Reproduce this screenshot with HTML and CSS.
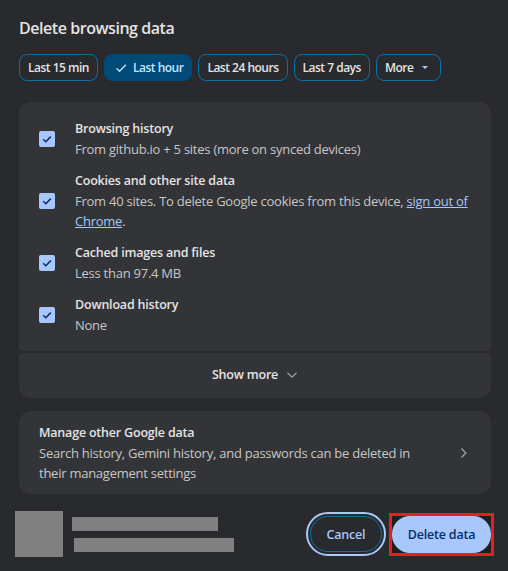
FILE: index.html
```html
<!DOCTYPE html>
<html lang="en">
<head>
  <meta charset="UTF-8">
  <title>Delete browsing data</title>
  <link rel="stylesheet" href="styles.css">
</head>
<body>
  <div class="dialog">
    <h1 class="title">Delete browsing data</h1>

    <div class="chips">
      <button class="chip">Last 15 min</button>
      <button class="chip selected">
        <svg class="chip-check" width="12" height="12" viewBox="0 0 12 12"><path d="M1.5 6.3 L4.6 9.3 L10.8 2.8" fill="none" stroke="currentColor" stroke-width="1.3"/></svg>
        Last hour
      </button>
      <button class="chip">Last 24 hours</button>
      <button class="chip">Last 7 days</button>
      <button class="chip more">More <span class="caret"></span></button>
    </div>

    <div class="data-types">
      <ul class="types-list">
        <li class="type-row">
          <span class="checkbox"><svg width="16" height="16" viewBox="0 0 16 16"><path d="M4.2 8.3 L6.8 10.7 L11.8 5.6" fill="none" stroke="#062e6f" stroke-width="1.5"/></svg></span>
          <div class="type-text">
            <div class="type-name">Browsing history</div>
            <div class="type-desc">From github.io + 5 sites (more on synced devices)</div>
          </div>
        </li>
        <li class="type-row">
          <span class="checkbox"><svg width="16" height="16" viewBox="0 0 16 16"><path d="M4.2 8.3 L6.8 10.7 L11.8 5.6" fill="none" stroke="#062e6f" stroke-width="1.5"/></svg></span>
          <div class="type-text">
            <div class="type-name">Cookies and other site data</div>
            <div class="type-desc">From 40 sites. To delete Google cookies from this device, <a href="#" class="link">sign out of Chrome</a>.</div>
          </div>
        </li>
        <li class="type-row">
          <span class="checkbox"><svg width="16" height="16" viewBox="0 0 16 16"><path d="M4.2 8.3 L6.8 10.7 L11.8 5.6" fill="none" stroke="#062e6f" stroke-width="1.5"/></svg></span>
          <div class="type-text">
            <div class="type-name">Cached images and files</div>
            <div class="type-desc">Less than 97.4 MB</div>
          </div>
        </li>
        <li class="type-row">
          <span class="checkbox"><svg width="16" height="16" viewBox="0 0 16 16"><path d="M4.2 8.3 L6.8 10.7 L11.8 5.6" fill="none" stroke="#062e6f" stroke-width="1.5"/></svg></span>
          <div class="type-text">
            <div class="type-name">Download history</div>
            <div class="type-desc">None</div>
          </div>
        </li>
      </ul>
      <button class="show-more">
        Show more
        <svg width="12" height="8" viewBox="0 0 12 8"><path d="M1.5 1.8 L6 6.2 L10.5 1.8" fill="none" stroke="#9aa0a6" stroke-width="1.2"/></svg>
      </button>
    </div>

    <a href="#" class="manage-card">
      <div class="manage-text">
        <div class="type-name">Manage other Google data</div>
        <div class="type-desc">Search history, Gemini history, and passwords can be deleted in their management settings</div>
      </div>
      <svg class="manage-arrow" width="24" height="20" viewBox="0 0 24 20"><path d="M9.5 5.5 L13.8 10 L9.5 14.5" fill="none" stroke="#9aa0a6" stroke-width="1.3"/></svg>
    </a>

    <div class="footer">
      <div class="account">
        <div class="avatar"></div>
        <div class="account-lines">
          <span class="bar bar-name"></span>
          <span class="bar bar-email"></span>
        </div>
      </div>
      <div class="actions">
        <button class="btn-cancel">Cancel</button>
        <span class="confirm-frame"><button class="btn-delete">Delete data</button></span>
      </div>
    </div>
  </div>
</body>
</html>
```

FILE: styles.css
```css
body {
  margin: 0;
  background-color: #292a2d;
  font-family: "Open Sans", "Noto Sans", sans-serif;
  color: #e3e3e3;
}
button {
  font-family: inherit;
  cursor: pointer;
}
.dialog {
  padding: 16px 17px 0 19px;
}
.title {
  margin: 0;
  font-size: 16px;
  line-height: 24px;
  font-weight: 600;
  letter-spacing: -0.45px;
}

/* time range chips */
.chips {
  display: flex;
  gap: 6px;
  margin-top: 14px;
}
.chip {
  display: inline-flex;
  align-items: center;
  gap: 6px;
  height: 27px;
  box-sizing: border-box;
  padding: 0 8px;
  border: 1px solid #0d6ea6;
  border-radius: 8px;
  background-color: transparent;
  color: #e3e3e3;
  font-size: 12px;
  font-weight: 600;
  letter-spacing: -0.5px;
}
.chip.selected {
  background-color: #004a77;
  border-color: #004a77;
  color: #c2e7ff;
  padding-left: 10px;
}
.chip.more {
  gap: 9px;
  padding-right: 12px;
}
.caret {
  width: 0;
  height: 0;
  border-left: 3.5px solid transparent;
  border-right: 3.5px solid transparent;
  border-top: 3.5px solid #a8c7fa;
}

/* data types card */
.data-types {
  display: flex;
  flex-direction: column;
  gap: 2px;
  margin-top: 21px;
}
.types-list {
  list-style: none;
  margin: 0;
  padding: 17px 20px 16px 20px;
  background-color: #333438;
  border-radius: 12px 12px 4px 4px;
  display: flex;
  flex-direction: column;
  gap: 12px;
}
.type-row {
  display: flex;
  align-items: center;
  gap: 20px;
}
.checkbox {
  flex: none;
  width: 16px;
  height: 16px;
  border-radius: 2px;
  background-color: #a8c7fa;
  display: flex;
}
.type-name {
  font-size: 12.5px;
  line-height: 20px;
  font-weight: 600;
  letter-spacing: -0.2px;
  color: #e3e3e3;
}
.type-desc {
  font-size: 13px;
  line-height: 20px;
  letter-spacing: -0.25px;
  color: #c7c7c7;
}
.link {
  color: #a8c7fa;
}
.show-more {
  height: 45px;
  border: none;
  border-radius: 4px 4px 12px 12px;
  background-color: #333438;
  color: #e3e3e3;
  font-size: 12.5px;
  font-weight: 600;
  letter-spacing: -0.2px;
  display: flex;
  align-items: center;
  justify-content: center;
  gap: 8px;
  padding-top: 0;
  padding-bottom: 2px;
}

/* other google data */
.manage-card {
  display: flex;
  align-items: center;
  gap: 8px;
  margin-top: 13px;
  padding: 12px 15px 11px 20px;
  background-color: #333438;
  border-radius: 12px;
  text-decoration: none;
}
.manage-text {
  flex: 1;
  padding-right: 10px;
}
.manage-arrow {
  flex: none;
}

/* footer */
.footer {
  display: flex;
  justify-content: space-between;
  align-items: center;
  margin-top: 17px;
  margin-left: -4px;
}
.account {
  display: flex;
  align-items: center;
  gap: 9px;
}
.avatar {
  width: 48px;
  height: 46px;
  background-color: #808080;
}
.account-lines {
  display: flex;
  flex-direction: column;
  gap: 7px;
}
.bar {
  height: 14px;
  background-color: #808080;
}
.bar-name {
  width: 146px;
}
.bar-email {
  width: 160px;
  margin-left: 2px;
}
.actions {
  display: flex;
  align-items: center;
  gap: 7px;
  margin-right: -3px;
}
.btn-cancel {
  width: 72px;
  height: 36px;
  border: 1px solid #0d6ea6;
  border-radius: 18px;
  background-color: transparent;
  color: #a8c7fa;
  font-size: 12.5px;
  font-weight: 600;
  letter-spacing: -0.2px;
  outline: 2px solid #a8c7fa;
  outline-offset: 2px;
}
.confirm-frame {
  display: flex;
  border: 3px solid #ed1c24;
  background-color: #1f1f1f;
}
.btn-delete {
  width: 99px;
  height: 37px;
  border: none;
  border-radius: 18px;
  background-color: #a8c7fa;
  color: #062e6f;
  font-size: 12.5px;
  font-weight: 600;
  letter-spacing: -0.2px;
}
```
